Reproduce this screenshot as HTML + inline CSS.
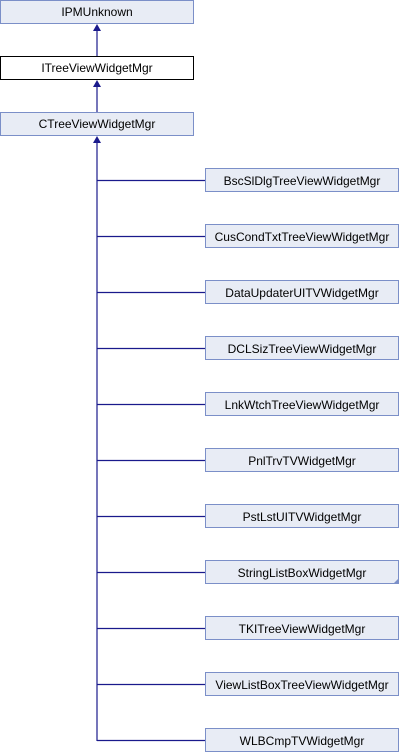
<!DOCTYPE html>
<html><head><style>body{margin:0;background:#fff}svg{display:block}text{font-family:"Liberation Sans",sans-serif;font-size:12px;fill:#000;text-anchor:middle}</style></head><body>
<svg width="400" height="752" viewBox="0 0 400 752">
<g fill="#e8ecf5" stroke="#7b8fc8" stroke-width="1">
<rect x="0.5" y="0.5" width="193" height="23"/>
<rect x="0.5" y="112.5" width="193" height="23"/>
</g>
<rect x="0.5" y="56.5" width="193" height="23" fill="#fff" stroke="#000"/>
<text x="97" y="16">IPMUnknown</text>
<text x="97" y="72">ITreeViewWidgetMgr</text>
<text x="97" y="128">CTreeViewWidgetMgr</text>
<g stroke="#1a1a8c" stroke-width="1.2" fill="none">
<line x1="97" y1="30" x2="97" y2="56"/>
<line x1="97" y1="86" x2="97" y2="112"/>
<line x1="97" y1="142" x2="97" y2="741"/>
</g>
<g fill="#1a1a8c">
<polygon points="97,24 93,31 101,31"/>
<polygon points="97,80 93,87 101,87"/>
<polygon points="97,136 93,143 101,143"/>
</g>
<g id="r"></g>
<g fill="#e8ecf5" stroke="#7b8fc8">
<rect x="205.5" y="168.5" width="193" height="23"/>
<rect x="205.5" y="224.5" width="193" height="23"/>
<rect x="205.5" y="280.5" width="193" height="23"/>
<rect x="205.5" y="336.5" width="193" height="23"/>
<rect x="205.5" y="392.5" width="193" height="23"/>
<rect x="205.5" y="448.5" width="193" height="23"/>
<rect x="205.5" y="504.5" width="193" height="23"/>
<rect x="205.5" y="560.5" width="193" height="23"/>
<rect x="205.5" y="616.5" width="193" height="23"/>
<rect x="205.5" y="672.5" width="193" height="23"/>
<rect x="205.5" y="728.5" width="193" height="23"/>
</g>
<polygon points="398,579 398,584 393,584" fill="#7b8fc8"/>
<g stroke="#1a1a8c" stroke-width="1.2">
<line x1="97" y1="180.5" x2="205" y2="180.5"/>
<line x1="97" y1="236.5" x2="205" y2="236.5"/>
<line x1="97" y1="292.5" x2="205" y2="292.5"/>
<line x1="97" y1="348.5" x2="205" y2="348.5"/>
<line x1="97" y1="404.5" x2="205" y2="404.5"/>
<line x1="97" y1="460.5" x2="205" y2="460.5"/>
<line x1="97" y1="516.5" x2="205" y2="516.5"/>
<line x1="97" y1="572.5" x2="205" y2="572.5"/>
<line x1="97" y1="628.5" x2="205" y2="628.5"/>
<line x1="97" y1="684.5" x2="205" y2="684.5"/>
<line x1="97" y1="740.5" x2="205" y2="740.5"/>
</g>
<text x="302" y="185">BscSlDlgTreeViewWidgetMgr</text>
<text x="302" y="241">CusCondTxtTreeViewWidgetMgr</text>
<text x="302" y="297">DataUpdaterUITVWidgetMgr</text>
<text x="302" y="353">DCLSizTreeViewWidgetMgr</text>
<text x="302" y="409">LnkWtchTreeViewWidgetMgr</text>
<text x="302" y="465">PnlTrvTVWidgetMgr</text>
<text x="302" y="521">PstLstUITVWidgetMgr</text>
<text x="302" y="577">StringListBoxWidgetMgr</text>
<text x="302" y="633">TKITreeViewWidgetMgr</text>
<text x="302" y="689">ViewListBoxTreeViewWidgetMgr</text>
<text x="302" y="745">WLBCmpTVWidgetMgr</text>
</svg>
</body></html>
